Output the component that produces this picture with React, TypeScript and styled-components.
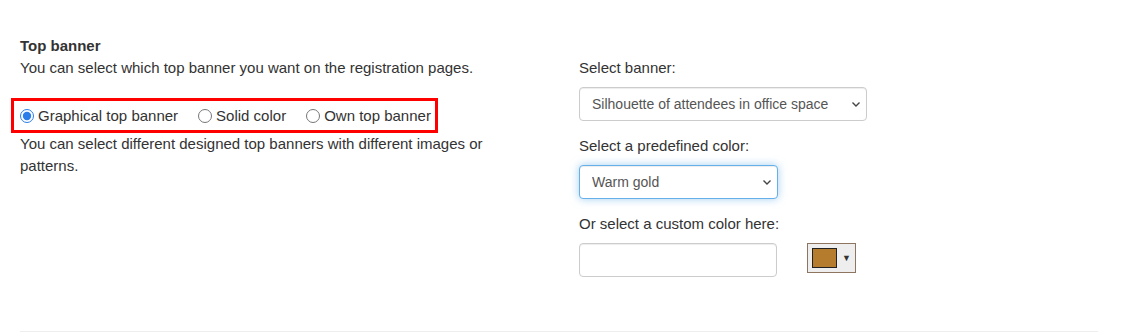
import React from "react";
import styled, { createGlobalStyle } from "styled-components";

const GlobalStyle = createGlobalStyle`
  body {
    margin: 0;
    background: #ffffff;
    font-family: "Liberation Sans", Arial, sans-serif;
    font-size: 15px;
    line-height: 22px;
    color: #333333;
  }
`;

const Page = styled.div`
  padding: 35px 24px 0 20px;
`;

const Columns = styled.div`
  display: grid;
  grid-template-columns: 520px 1fr;
  column-gap: 39px;
  height: 296px;
`;

const Heading = styled.div`
  font-weight: bold;
`;

const Text = styled.p`
  margin: 0;
`;

const RadioGroup = styled.div`
  display: flex;
  align-items: center;
  gap: 20px;
  margin: 19px 0 0 -9px;
  padding: 0 4px 0 6px;
  height: 29px;
  width: fit-content;
  border: 3px solid #ff0000;
`;

const RadioLabel = styled.label`
  display: flex;
  align-items: center;
  gap: 4px;
  cursor: pointer;

  input {
    margin: 0;
    width: 14px;
    height: 14px;
    accent-color: #2b7de9;
  }
`;

const Field = styled.div`
  display: flex;
  flex-direction: column;
  align-items: flex-start;
  margin-top: ${(p: { $first?: boolean }) => (p.$first ? "22px" : "14px")};
`;

const Label = styled.label`
  margin-bottom: 8px;
`;

const SelectWrap = styled.div<{ $width: number }>`
  position: relative;
  width: ${(p) => p.$width}px;
`;

const Select = styled.select<{ $focused?: boolean }>`
  appearance: none;
  width: 100%;
  height: 34px;
  padding: 0 28px 0 12px;
  font-family: "Liberation Sans", Arial, sans-serif;
  font-size: 14px;
  color: #555555;
  background: #ffffff;
  border: 1px solid ${(p) => (p.$focused ? "#66afe9" : "#cccccc")};
  border-radius: 4px;
  box-shadow: ${(p) =>
    p.$focused
      ? "inset 0 1px 1px rgba(0,0,0,.075), 0 0 8px rgba(102,175,233,.6)"
      : "inset 0 1px 1px rgba(0,0,0,.075)"};
  outline: none;
`;

const Chevron = styled.svg`
  position: absolute;
  right: 6px;
  top: 14px;
  pointer-events: none;
`;

const CustomRow = styled.div`
  display: flex;
  align-items: flex-start;
  gap: 30px;
`;

const TextInput = styled.input`
  width: 198px;
  height: 34px;
  box-sizing: border-box;
  border: 1px solid #cccccc;
  border-radius: 4px;
  box-shadow: inset 0 1px 1px rgba(0,0,0,.075);
  outline: none;
`;

const ColorButton = styled.div`
  display: flex;
  align-items: center;
  gap: 5px;
  box-sizing: border-box;
  height: 30px;
  width: 49px;
  padding: 0 0 0 4px;
  background: #eeeeee;
  border: 1px solid #8e7560;
`;

const Swatch = styled.span<{ $color: string }>`
  width: 25px;
  height: 20px;
  box-sizing: border-box;
  background: ${(p) => p.$color};
  border: 1px solid #222222;
`;

const Caret = styled.span`
  font-size: 9px;
  line-height: 1;
  color: #333333;
`;

const Rule = styled.hr`
  margin: 0 0 0 0;
  border: 0;
  border-top: 1px solid #eeeeee;
`;

const ChevronIcon = () => (
  <Chevron width="10" height="7" viewBox="0 0 10 7">
    <path d="M1.5 1.5 L5 5 L8.5 1.5" fill="none" stroke="#444" strokeWidth="1.4" />
  </Chevron>
);

const App: React.FC = () => {
  return (
    <>
      <GlobalStyle />
      <Page>
        <Columns>
          <div>
            <Heading>Top banner</Heading>
            <Text>You can select which top banner you want on the registration pages.</Text>
            <RadioGroup>
              <RadioLabel>
                <input type="radio" name="banner" defaultChecked />
                Graphical top banner
              </RadioLabel>
              <RadioLabel>
                <input type="radio" name="banner" />
                Solid color
              </RadioLabel>
              <RadioLabel>
                <input type="radio" name="banner" />
                Own top banner
              </RadioLabel>
            </RadioGroup>
            <Text>
              You can select different designed top banners with different images or patterns.
            </Text>
          </div>
          <div>
            <Field $first>
              <Label>Select banner:</Label>
              <SelectWrap $width={288}>
                <Select defaultValue="office">
                  <option value="office">Silhouette of attendees in office space</option>
                </Select>
                <ChevronIcon />
              </SelectWrap>
            </Field>
            <Field>
              <Label>Select a predefined color:</Label>
              <SelectWrap $width={199}>
                <Select $focused defaultValue="gold">
                  <option value="gold">Warm gold</option>
                </Select>
                <ChevronIcon />
              </SelectWrap>
            </Field>
            <Field>
              <Label>Or select a custom color here:</Label>
              <CustomRow>
                <TextInput type="text" />
                <ColorButton>
                  <Swatch $color="#b57c2d" />
                  <Caret>▼</Caret>
                </ColorButton>
              </CustomRow>
            </Field>
          </div>
        </Columns>
        <Rule />
      </Page>
    </>
  );
};

export default App;
